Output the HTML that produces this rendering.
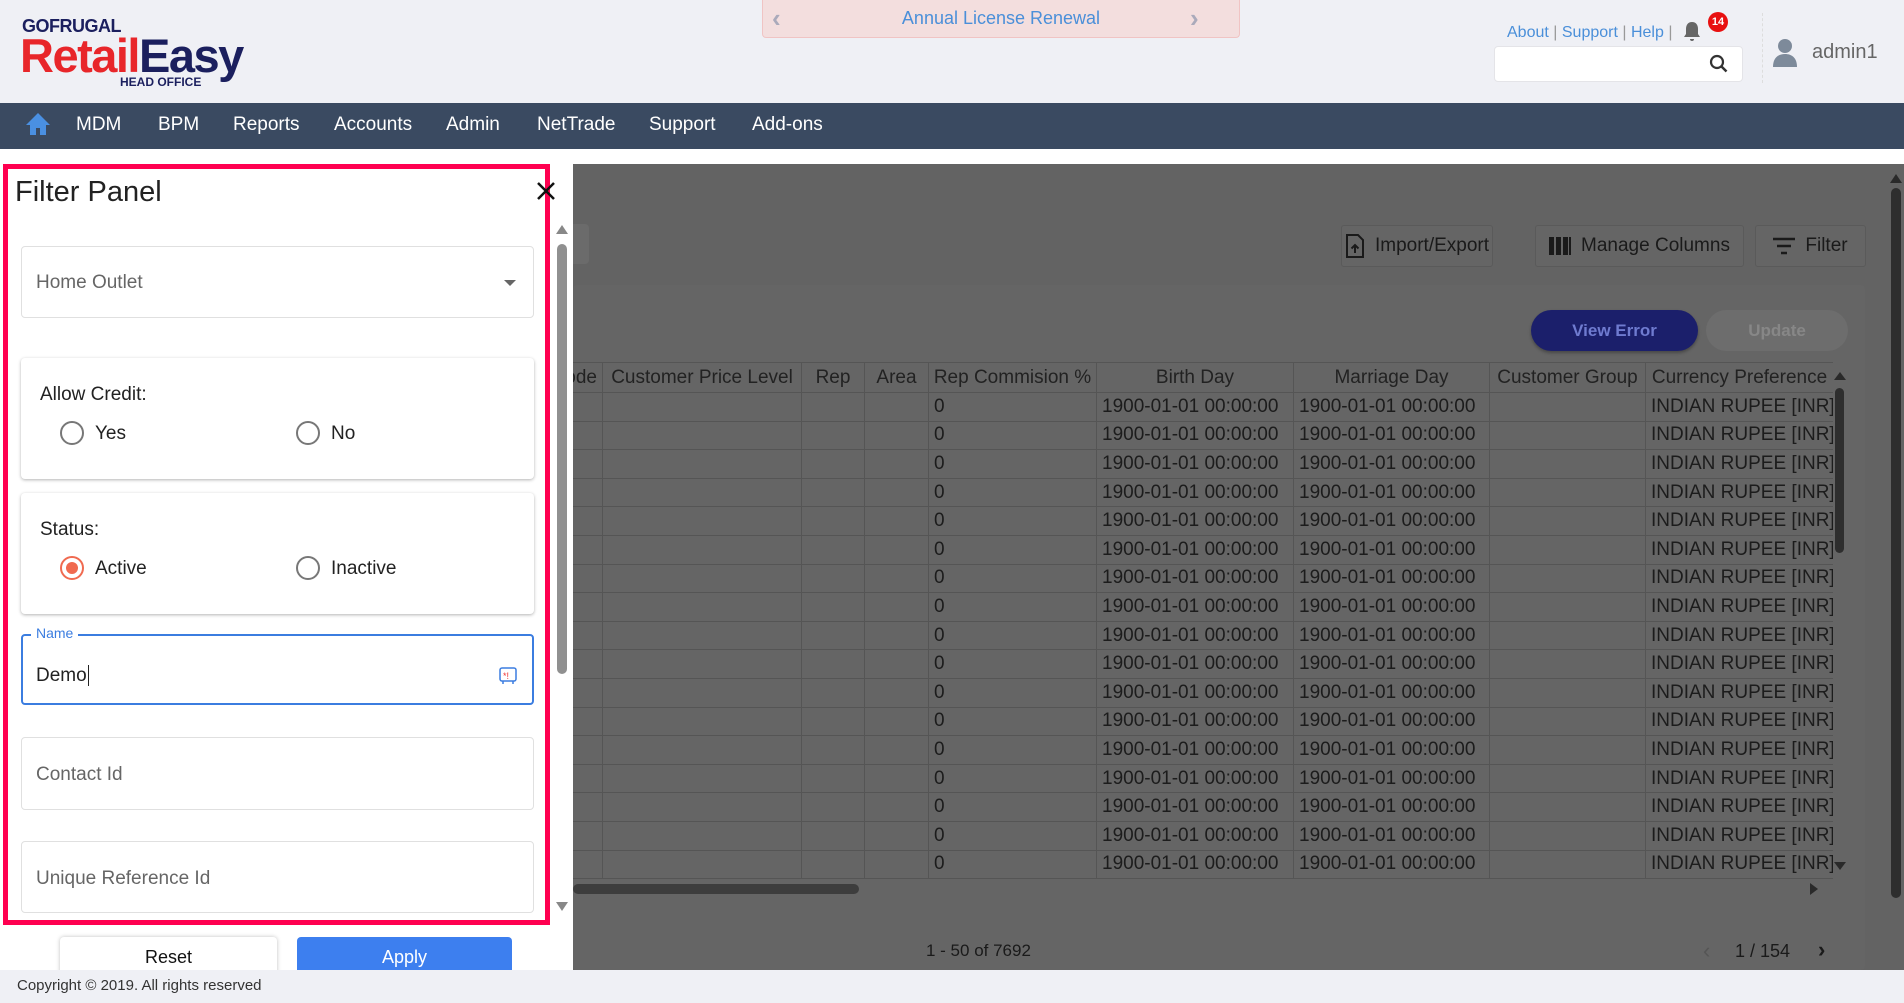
<!DOCTYPE html>
<html><head><meta charset="utf-8"><style>
*{box-sizing:border-box;margin:0;padding:0}
body{width:1904px;height:1003px;overflow:hidden;background:#eff0f5;font-family:"Liberation Sans",sans-serif;position:relative}
.a{position:absolute}
.nav span{position:absolute;top:114px;color:#fff;font-size:19px}
table{position:absolute;left:540px;top:362px;border-collapse:collapse;table-layout:fixed;font-size:19px;color:#1c1c1c;width:1293px}
td,th{border:1px solid #555;height:28.6px;white-space:nowrap;overflow:hidden;padding:0 5px;font-weight:normal;text-align:left}
th{height:30px;text-align:center;color:#222}
.fld{position:absolute;left:21px;width:513px;background:#fff;border:1px solid #e0e0e0;border-radius:4px}
.ph{position:absolute;left:14px;color:#666;font-size:19px}
.card{position:absolute;left:21px;width:513px;background:#fff;border-radius:4px;box-shadow:0 1px 3px rgba(0,0,0,.3)}
.rad{position:absolute;width:24px;height:24px;border:2px solid #777;border-radius:50%}
.rl{position:absolute;font-size:19px;color:#222}
.tb{position:absolute;top:225px;height:42px;border:1px solid #5a5a5a;border-radius:3px;background:#656565;color:#1a1a1a;font-size:18px;display:flex;align-items:center;justify-content:center;gap:10px;white-space:nowrap}
</style></head><body>
<div class="a" style="left:22px;top:16px;font-size:18px;color:#1b1f5e;font-weight:bold;letter-spacing:-0.5px">GOFRUGAL</div>
<div class="a" style="left:20px;top:30px;font-size:47px;font-weight:bold;letter-spacing:-1.5px;line-height:52px"><span style="color:#e8262a">Retail</span><span style="color:#1b1f5e">Easy</span></div>
<div class="a" style="left:120px;top:75px;font-size:12px;color:#1b1f5e;font-weight:bold;background:#eff0f5;padding-right:2px">HEAD OFFICE</div>
<div class="a" style="left:762px;top:0;width:478px;height:38px;background:#f3dede;border:1px solid #f0c4c4;border-top:none;border-radius:0 0 4px 4px;color:#4a8fd9;font-size:18px;text-align:center;line-height:36px">Annual License Renewal</div>
<div class="a" style="left:772px;top:3px;color:#aab;font-size:26px;font-weight:bold">‹</div>
<div class="a" style="left:1190px;top:3px;color:#aab;font-size:26px;font-weight:bold">›</div>
<div class="a" style="left:1507px;top:24px;font-size:16px;color:#4a8fd9">About <span style="color:#999">|</span> Support <span style="color:#999">|</span> Help <span style="color:#999">|</span></div>
<svg class="a" style="left:1683px;top:21px" width="18" height="22" viewBox="0 0 18 22"><path d="M9 1c-4 0-6 3-6 7v5l-2 3h16l-2-3V8c0-4-2-7-6-7zM7 18a2 2 0 0 0 4 0z" fill="#666"/></svg>
<div class="a" style="left:1708px;top:12px;width:20px;height:20px;border-radius:50%;background:#e81010;color:#fff;font-size:11px;font-weight:bold;text-align:center;line-height:20px">14</div>
<div class="a" style="left:1494px;top:46px;width:249px;height:36px;background:#fff;border:1px solid #e4e4e8;border-radius:4px"></div>
<svg class="a" style="left:1709px;top:54px" width="20" height="20" viewBox="0 0 20 20"><circle cx="8" cy="8" r="6" fill="none" stroke="#333" stroke-width="2.2"/><path d="M12.5 12.5l5 5" stroke="#333" stroke-width="2.5"/></svg>
<div class="a" style="left:1762px;top:13px;height:70px;border-left:1px dashed #ddd"></div>
<svg class="a" style="left:1773px;top:37px" width="24" height="30" viewBox="0 0 24 30"><circle cx="12" cy="9" r="7" fill="#7d8a9a"/><path d="M0 30c0-9 5-13 12-13s12 4 12 13z" fill="#7d8a9a"/></svg>
<div class="a" style="left:1812px;top:41px;font-size:20px;color:#666">admin1</div>
<div class="a" style="left:0;top:103px;width:1904px;height:46px;background:#3a4a61"></div>
<div class="nav">
<svg class="a" style="left:26px;top:112px" width="24" height="24" viewBox="0 0 24 24"><path d="M12 1L0 13h4v10h6v-7h4v7h6V13h4z" fill="#4a90e2"/></svg>
<span style="left:76px">MDM</span><span style="left:158px">BPM</span><span style="left:233px">Reports</span><span style="left:334px">Accounts</span><span style="left:446px">Admin</span><span style="left:537px">NetTrade</span><span style="left:649px">Support</span><span style="left:752px">Add-ons</span>
</div>
<div class="a" style="left:0;top:149px;width:1904px;height:15px;background:#fff"></div>
<div class="a" style="left:573px;top:164px;width:1331px;height:806px;background:#636363;overflow:hidden">
 <div class="a" style="left:0;top:60px;width:16px;height:40px;background:#6b6b6b;border-radius:0 4px 4px 0"></div>
 <div class="a" style="left:0;top:121px;width:1292px;height:685px;background:#656565;border-radius:4px"></div>
 <div class="a" style="left:1317px;top:10px;width:0;height:0;border-left:6px solid transparent;border-right:6px solid transparent;border-bottom:9px solid #2a2a2a"></div>
 <div class="a" style="left:1318px;top:24px;width:10px;height:710px;background:#2e2e2e;border-radius:5px"></div>
</div>
<div class="tb" style="left:1341px;width:152px;font-size:19px"><svg width="20" height="24" viewBox="0 0 20 24"><path d="M2 1h11l5 5v17H2z" fill="none" stroke="#1a1a1a" stroke-width="2"/><path d="M10 19v-8M6.5 14.5L10 11l3.5 3.5" stroke="#1a1a1a" stroke-width="2" fill="none"/></svg>Import/Export</div>
<div class="tb" style="left:1535px;width:209px;font-size:19px"><svg width="22" height="18" viewBox="0 0 22 18"><rect x="0" y="0" width="5" height="18" fill="#1a1a1a"/><rect x="7" y="0" width="5" height="18" fill="#1a1a1a"/><rect x="14" y="0" width="5" height="18" fill="#1a1a1a"/><rect x="20" y="0" width="2" height="18" fill="#1a1a1a"/></svg>Manage Columns</div>
<div class="tb" style="left:1755px;width:111px;font-size:19px"><svg width="22" height="18" viewBox="0 0 22 18"><path d="M0 2h22M4 9h14M8 16h6" stroke="#1a1a1a" stroke-width="2.5"/></svg>Filter</div>
<div class="a" style="left:1531px;top:310px;width:167px;height:41px;border-radius:21px;background:#1b1f6b;color:#6f7bd0;font-size:17px;font-weight:bold;text-align:center;line-height:41px;box-shadow:0 2px 3px rgba(0,0,0,.3)">View Error</div>
<div class="a" style="left:1706px;top:310px;width:142px;height:41px;border-radius:21px;background:#6d6d6d;color:#878787;font-size:17px;font-weight:bold;text-align:center;line-height:41px">Update</div>
<div class="a" style="left:573px;top:362px;width:1260px;height:517px;overflow:hidden">
<table style="left:-33px;top:0">
<colgroup><col style="width:62px"><col style="width:199px"><col style="width:63px"><col style="width:64px"><col style="width:168px"><col style="width:197px"><col style="width:196px"><col style="width:156px"><col style="width:188px"></colgroup>
<tr><th style="text-align:right">Code</th><th>Customer Price Level</th><th>Rep</th><th>Area</th><th style="padding:0 3px">Rep Commision %</th><th>Birth Day</th><th>Marriage Day</th><th>Customer Group</th><th style="padding:0 2px">Currency Preference</th></tr>
<tr><td></td><td></td><td></td><td></td><td>0</td><td>1900-01-01 00:00:00</td><td>1900-01-01 00:00:00</td><td></td><td>INDIAN RUPEE [INR]</td></tr>
<tr><td></td><td></td><td></td><td></td><td>0</td><td>1900-01-01 00:00:00</td><td>1900-01-01 00:00:00</td><td></td><td>INDIAN RUPEE [INR]</td></tr>
<tr><td></td><td></td><td></td><td></td><td>0</td><td>1900-01-01 00:00:00</td><td>1900-01-01 00:00:00</td><td></td><td>INDIAN RUPEE [INR]</td></tr>
<tr><td></td><td></td><td></td><td></td><td>0</td><td>1900-01-01 00:00:00</td><td>1900-01-01 00:00:00</td><td></td><td>INDIAN RUPEE [INR]</td></tr>
<tr><td></td><td></td><td></td><td></td><td>0</td><td>1900-01-01 00:00:00</td><td>1900-01-01 00:00:00</td><td></td><td>INDIAN RUPEE [INR]</td></tr>
<tr><td></td><td></td><td></td><td></td><td>0</td><td>1900-01-01 00:00:00</td><td>1900-01-01 00:00:00</td><td></td><td>INDIAN RUPEE [INR]</td></tr>
<tr><td></td><td></td><td></td><td></td><td>0</td><td>1900-01-01 00:00:00</td><td>1900-01-01 00:00:00</td><td></td><td>INDIAN RUPEE [INR]</td></tr>
<tr><td></td><td></td><td></td><td></td><td>0</td><td>1900-01-01 00:00:00</td><td>1900-01-01 00:00:00</td><td></td><td>INDIAN RUPEE [INR]</td></tr>
<tr><td></td><td></td><td></td><td></td><td>0</td><td>1900-01-01 00:00:00</td><td>1900-01-01 00:00:00</td><td></td><td>INDIAN RUPEE [INR]</td></tr>
<tr><td></td><td></td><td></td><td></td><td>0</td><td>1900-01-01 00:00:00</td><td>1900-01-01 00:00:00</td><td></td><td>INDIAN RUPEE [INR]</td></tr>
<tr><td></td><td></td><td></td><td></td><td>0</td><td>1900-01-01 00:00:00</td><td>1900-01-01 00:00:00</td><td></td><td>INDIAN RUPEE [INR]</td></tr>
<tr><td></td><td></td><td></td><td></td><td>0</td><td>1900-01-01 00:00:00</td><td>1900-01-01 00:00:00</td><td></td><td>INDIAN RUPEE [INR]</td></tr>
<tr><td></td><td></td><td></td><td></td><td>0</td><td>1900-01-01 00:00:00</td><td>1900-01-01 00:00:00</td><td></td><td>INDIAN RUPEE [INR]</td></tr>
<tr><td></td><td></td><td></td><td></td><td>0</td><td>1900-01-01 00:00:00</td><td>1900-01-01 00:00:00</td><td></td><td>INDIAN RUPEE [INR]</td></tr>
<tr><td></td><td></td><td></td><td></td><td>0</td><td>1900-01-01 00:00:00</td><td>1900-01-01 00:00:00</td><td></td><td>INDIAN RUPEE [INR]</td></tr>
<tr><td></td><td></td><td></td><td></td><td>0</td><td>1900-01-01 00:00:00</td><td>1900-01-01 00:00:00</td><td></td><td>INDIAN RUPEE [INR]</td></tr>
<tr><td></td><td></td><td></td><td></td><td>0</td><td>1900-01-01 00:00:00</td><td>1900-01-01 00:00:00</td><td></td><td>INDIAN RUPEE [INR]</td></tr>
</table>
</div>
<div class="a" style="left:1834px;top:372px;width:0;height:0;border-left:6px solid transparent;border-right:6px solid transparent;border-bottom:8px solid #2a2a2a"></div>
<div class="a" style="left:1835px;top:388px;width:9px;height:165px;background:#2e2e2e;border-radius:5px"></div>
<div class="a" style="left:1834px;top:862px;width:0;height:0;border-left:6px solid transparent;border-right:6px solid transparent;border-top:8px solid #2a2a2a"></div>
<div class="a" style="left:573px;top:884px;width:286px;height:10px;background:#3d3d3d;border-radius:5px"></div>
<div class="a" style="left:1810px;top:883px;width:0;height:0;border-top:6px solid transparent;border-bottom:6px solid transparent;border-left:8px solid #2a2a2a"></div>
<div class="a" style="left:926px;top:941px;font-size:17px;color:#1a1a1a">1 - 50 of 7692</div>
<div class="a" style="left:1703px;top:938px;font-size:22px;color:#555">‹</div>
<div class="a" style="left:1735px;top:941px;font-size:18px;color:#1a1a1a">1 / 154</div>
<div class="a" style="left:1818px;top:937px;font-size:22px;color:#1a1a1a;font-weight:bold">›</div>
<div class="a" style="left:0;top:164px;width:573px;height:806px;background:#fff">
 <div class="a" style="left:3px;top:0;width:547px;height:761px;border:5px solid #ff0050"></div>
 <div class="a" style="left:15px;top:12px;font-size:29px;color:#222">Filter Panel</div>
 <svg class="a" style="left:536px;top:17px" width="20" height="20" viewBox="0 0 20 20"><path d="M2 2l16 16M18 2L2 18" stroke="#111" stroke-width="2.5"/></svg>
 <div class="fld" style="top:82px;height:72px"><div class="ph" style="top:25px">Home Outlet</div><div class="a" style="left:482px;top:33px;width:0;height:0;border-left:6px solid transparent;border-right:6px solid transparent;border-top:6px solid #666"></div></div>
 <div class="card" style="top:194px;height:121px"><div class="rl" style="left:19px;top:26px">Allow Credit:</div>
  <div class="rad" style="left:39px;top:63px"></div><div class="rl" style="left:74px;top:65px">Yes</div>
  <div class="rad" style="left:275px;top:63px"></div><div class="rl" style="left:310px;top:65px">No</div></div>
 <div class="card" style="top:329px;height:121px"><div class="rl" style="left:19px;top:26px">Status:</div>
  <div class="rad" style="left:39px;top:63px;border-color:#f06a50"><div class="a" style="left:4px;top:4px;width:12px;height:12px;border-radius:50%;background:#f06a50"></div></div><div class="rl" style="left:74px;top:65px">Active</div>
  <div class="rad" style="left:275px;top:63px"></div><div class="rl" style="left:310px;top:65px">Inactive</div></div>
 <div class="a" style="left:21px;top:470px;width:513px;height:71px;border:2px solid #3b7de0;border-radius:4px">
  <div class="a" style="left:8px;top:-11px;background:#fff;padding:0 5px;font-size:14px;color:#3b7de0">Name</div>
  <div class="a" style="left:13px;top:29px;font-size:19px;color:#222">Demo<span style="border-left:1.5px solid #222;margin-left:1px"></span></div>
  <svg class="a" style="left:476px;top:31px" width="18" height="18" viewBox="0 0 18 18"><rect x="1" y="1" width="16" height="13" rx="2" fill="none" stroke="#3b7de0" stroke-width="1.5"/><path d="M4 14v3M14 14v3" stroke="#3b7de0" stroke-width="1.5"/><text x="4" y="12" font-size="9" fill="#e33" font-family="Liberation Sans">*!</text></svg>
 </div>
 <div class="fld" style="top:573px;height:73px"><div class="ph" style="top:26px">Contact Id</div></div>
 <div class="fld" style="top:677px;height:72px"><div class="ph" style="top:26px">Unique Reference Id</div></div>
 <div class="a" style="left:556px;top:61px;width:0;height:0;border-left:6px solid transparent;border-right:6px solid transparent;border-bottom:9px solid #888"></div>
 <div class="a" style="left:557px;top:80px;width:10px;height:430px;background:#909090;border-radius:5px"></div>
 <div class="a" style="left:556px;top:738px;width:0;height:0;border-left:6px solid transparent;border-right:6px solid transparent;border-top:9px solid #888"></div>
 <div class="a" style="left:60px;top:773px;width:217px;height:40px;background:#fff;border-radius:4px;box-shadow:0 0 4px rgba(0,0,0,.25);text-align:center;line-height:40px;font-size:18px;color:#111">Reset</div>
 <div class="a" style="left:297px;top:773px;width:215px;height:40px;background:#3d7fef;border-radius:4px;text-align:center;line-height:40px;font-size:18px;color:#fff">Apply</div>
</div>
<div class="a" style="left:0;top:970px;width:1904px;height:33px;background:#eff0f5"></div>
<div class="a" style="left:17px;top:977px;font-size:15px;color:#333">Copyright © 2019. All rights reserved</div>
</body></html>
